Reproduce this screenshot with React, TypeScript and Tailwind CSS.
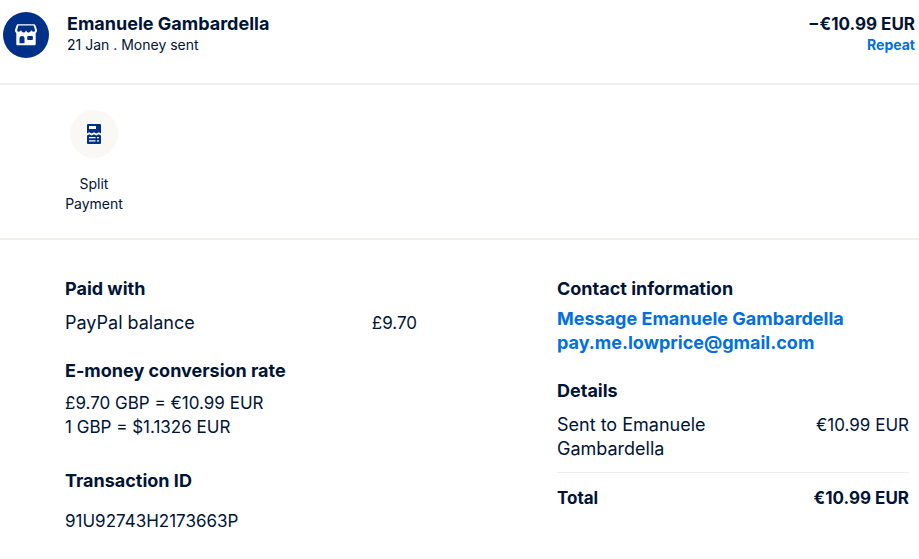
import React from 'react';

// Storefront glyph inside the merchant avatar
function StoreIcon() {
  return (
    <svg viewBox="0 0 24 24" className="w-6 h-6" aria-hidden="true">
      <path
        d="M4.200 1.200h15.600c.8 0 1.400.5 1.700 1.200l1.400 4.200c.3 1.300-.1 2.700-1.200 3.500V21c0 .8-.5 1.300-1.300 1.300H3.600c-.8 0-1.300-.5-1.300-1.300V10.100C1.200 9.300.8 7.900 1.100 6.600L2.500 2.400c.3-.7.9-1.200 1.700-1.200Z"
        fill="#fff"
      />
      <path
        d="M4.400 2.600h15.200l1.400 4.400c.1 1-.6 1.800-1.500 1.800-1.100 0-1.900-.7-2.300-1.700-.4 1.600-1.400 2.500-2.500 2.500S12.400 8.700 12 7.200c-.4 1.500-1.400 2.400-2.500 2.400S7.400 8.700 7 7.100c-.4 1-1.200 1.700-2.300 1.700-.9 0-1.600-.8-1.500-1.800Z"
        fill="#003087"
      />
      <path d="M5.500 20.300v-5.100c0-1.500 1-2.300 2.500-2.300s2.500.8 2.500 2.300v5.100Z" fill="#003087" />
      <rect x="13.200" y="12.900" width="5.700" height="4.200" rx="1" fill="#003087" />
    </svg>
  );
}

// Receipt torn across the middle
function SplitIcon() {
  return (
    <svg viewBox="0 0 16 22" className="w-4 h-[22px]" aria-hidden="true">
      <path
        d="M2.300 1h11.400c.8 0 1.300.5 1.300 1.300v8.200l-2.300-1.300-2.400 1.400L8 9.200l-2.300 1.400-2.400-1.400L1 10.500V2.300C1 1.500 1.500 1 2.300 1Z"
        fill="#003087"
      />
      <path
        d="m1 12.500 2.300-1.300 2.400 1.400L8 11.200l2.300 1.400 2.400-1.400 2.300 1.300v7.200c0 .8-.5 1.300-1.300 1.300H2.300C1.500 21 1 20.500 1 19.700Z"
        fill="#003087"
      />
      <path d="M3 3h7v3H3zM3 14h6.500v1.300H3zM11 14h2v1.300h-2zM3 17.300h6.500v1.300H3zM11 17.300h2v1.300h-2z" fill="#fff" />
    </svg>
  );
}

function Heading({ children, className = '' }: { children: React.ReactNode; className?: string }) {
  return <h2 className={`font-bold ${className}`}>{children}</h2>;
}

export default function App() {
  return (
    <main className="font-[Inter,sans-serif] text-lg leading-6 text-[#001435] bg-white min-h-screen">
      {/* Summary */}
      <header className="flex items-start gap-[18px] pt-3 pb-[25px] pl-[3px] pr-1 border-b-2 border-[#efefef]">
        <div className="w-[46px] h-[46px] rounded-full bg-[#003087] flex items-center justify-center shrink-0">
          <StoreIcon />
        </div>
        <div className="flex-1">
          <h1 className="font-bold">Emanuele Gambardella</h1>
          <p className="text-sm leading-[18px]">21 Jan . Money sent</p>
        </div>
        <div className="text-right">
          <p className="text-[17px] leading-6 font-bold">−€10.99 EUR</p>
          <a href="#repeat" className="block text-sm leading-[18px] font-bold text-[#0070e0]">Repeat</a>
        </div>
      </header>

      {/* Actions */}
      <section className="pt-[25px] pb-6 pl-[65px] border-b-2 border-[#efefec]">
        <button className="w-[58px] flex flex-col items-center gap-4 text-sm leading-5">
          <span className="w-12 h-12 rounded-full bg-[#faf8f5] flex items-center justify-center">
            <SplitIcon />
          </span>
          <span>Split Payment</span>
        </button>
      </section>

      {/* Transaction details */}
      <div className="grid grid-cols-2 gap-[140px] pt-[37px] pl-[65px] pr-[10px]">
        <section>
          <Heading>Paid with</Heading>
          <div className="flex justify-between mt-[10px]">
            <span>PayPal balance</span>
            <span className="text-[17px]">£9.70</span>
          </div>

          <Heading className="mt-6">E-money conversion rate</Heading>
          <div className="mt-2 text-[17px] leading-6">
            <p>£9.70 GBP = €10.99 EUR</p>
            <p>1 GBP = $1.1326 EUR</p>
          </div>

          <Heading className="mt-[30px]">Transaction ID</Heading>
          <p className="mt-4 text-[17px] leading-6">91U92743H2173663P</p>
        </section>

        <section>
          <Heading>Contact information</Heading>
          <div className="mt-[6px] font-bold text-[#0070e0] whitespace-nowrap">
            <a href="#message" className="block">Message Emanuele Gambardella</a>
            <a href="mailto:pay.me.lowprice@gmail.com" className="block">pay.me.lowprice@gmail.com</a>
          </div>

          <Heading className="mt-6">Details</Heading>
          <div className="flex justify-between mt-[10px] pb-[11px] border-b border-[#efefec]">
            <span className="w-1/2">Sent to Emanuele Gambardella</span>
            <span className="text-[17px]">€10.99 EUR</span>
          </div>
          <div className="flex justify-between mt-[13px] text-[17px] leading-6 font-bold">
            <span>Total</span>
            <span>€10.99 EUR</span>
          </div>
        </section>
      </div>
    </main>
  );
}
